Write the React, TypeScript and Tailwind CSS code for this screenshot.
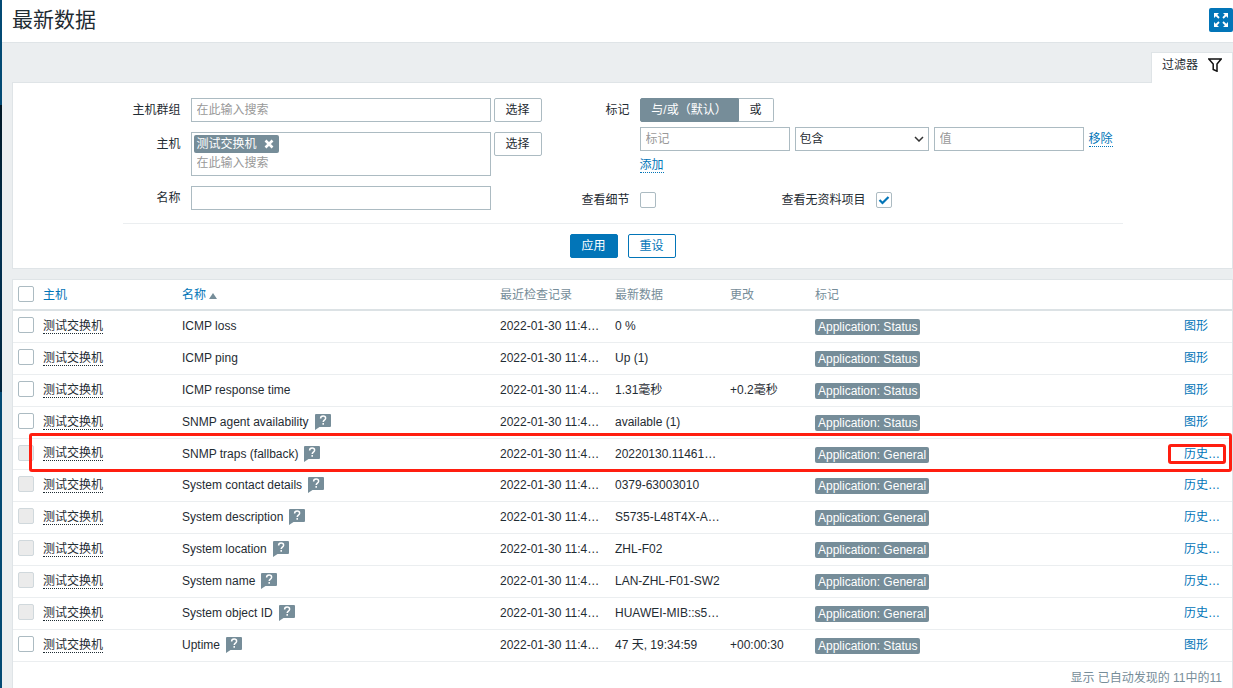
import { useState, type ReactNode } from 'react';

interface Item {
  name: string;
  help?: boolean;
  data: string;
  change?: string;
  tag: string;
  graph?: boolean;
  marked?: boolean;
}

const ITEMS: Item[] = [
  { name: 'ICMP loss', data: '0 %', tag: 'Application: Status', graph: true },
  { name: 'ICMP ping', data: 'Up (1)', tag: 'Application: Status', graph: true },
  { name: 'ICMP response time', data: '1.31毫秒', change: '+0.2毫秒', tag: 'Application: Status', graph: true },
  { name: 'SNMP agent availability', help: true, data: 'available (1)', tag: 'Application: Status', graph: true },
  { name: 'SNMP traps (fallback)', help: true, data: '20220130.11461…', tag: 'Application: General', marked: true },
  { name: 'System contact details', help: true, data: '0379-63003010', tag: 'Application: General' },
  { name: 'System description', help: true, data: 'S5735-L48T4X-A…', tag: 'Application: General' },
  { name: 'System location', help: true, data: 'ZHL-F02', tag: 'Application: General' },
  { name: 'System name', help: true, data: 'LAN-ZHL-F01-SW2', tag: 'Application: General' },
  { name: 'System object ID', help: true, data: 'HUAWEI-MIB::s5…', tag: 'Application: General' },
  { name: 'Uptime', help: true, data: '47 天, 19:34:59', change: '+00:00:30', tag: 'Application: Status', graph: true },
];

const INPUT = 'h-6 border border-[#acbbc2] bg-white px-[5px] placeholder:text-[#999] outline-none';
const BUTTON = 'h-6 w-12 shrink-0 rounded-[2px] border';
const DOTTED = 'border-b border-dotted leading-[14px]';

function Checkbox({ id, label, disabled, defaultChecked }: { id: string; label?: string; disabled?: boolean; defaultChecked?: boolean }) {
  return (
    <span className="relative block size-4">
      <input
        id={id}
        type="checkbox"
        aria-label={label}
        disabled={disabled}
        defaultChecked={defaultChecked}
        className="peer block size-4 appearance-none rounded-[2px] border border-[#acbbc2] bg-white disabled:border-[#d0d8dc] disabled:bg-[#ebebeb]"
      />
      <svg viewBox="0 0 16 16" className="pointer-events-none absolute inset-0 hidden size-4 peer-checked:block">
        <path d="M3.5 8l3 3 6-6" fill="none" stroke="#0275b8" strokeWidth="2.2" />
      </svg>
    </span>
  );
}

function HelpIcon() {
  return (
    <button type="button" aria-label="描述" className="block">
      <svg viewBox="0 0 16 16" className="block size-4">
        <path d="M1 0h14a1 1 0 0 1 1 1v11a1 1 0 0 1-1 1H4.500L0 16V1a1 1 0 0 1 1-1z" fill="#768d99" />
        <path d="M5.600 4.500C5.600 3 6.700 2.100 8.100 2.100s2.500.8 2.500 2.100c0 1.900-2.400 1.900-2.400 3.700M8.200 9v1.700" fill="none" stroke="#fff" strokeWidth="1.500" />
      </svg>
    </button>
  );
}

function FormRow({ label, htmlFor, children }: { label: string; htmlFor: string; children: ReactNode }) {
  return (
    <div className="flex gap-[10px]">
      <label htmlFor={htmlFor} className="w-[58px] shrink-0 text-right leading-6">{label}</label>
      {children}
    </div>
  );
}

function Filter() {
  const [mode, setMode] = useState('and');

  return (
    <form className="border border-[#dfe4e7] bg-white px-3 pt-[15px] pb-[10px]">
      <div className="mx-auto max-w-[1000px]">
        <div className="flex border-b border-[#ebeef0] pb-[11px]">
          <div className="flex w-[449px] shrink-0 flex-col gap-[10px]">
            <FormRow label="主机群组" htmlFor="groups">
              <div className="flex gap-[3px]">
                <input id="groups" placeholder="在此输入搜索" className={`${INPUT} w-[300px]`} />
                <button type="button" className={`${BUTTON} border-[#acbbc2]`}>选择</button>
              </div>
            </FormRow>
            <FormRow label="主机" htmlFor="hosts">
              <div className="flex items-start gap-[3px]">
                <div className="h-11 w-[300px] border border-[#acbbc2] p-[2px]">
                  <span className="flex h-[18px] w-fit items-center gap-[7px] rounded-[2px] bg-[#768d99] pr-[5px] pl-[3px] text-white">
                    测试交换机
                    <button type="button" aria-label="删除">
                      <svg viewBox="0 0 10 10" className="block size-[10px]">
                        <path d="M1.500 1.500l7 7M8.500 1.500l-7 7" stroke="#fff" strokeWidth="2.600" />
                      </svg>
                    </button>
                  </span>
                  <input id="hosts" placeholder="在此输入搜索" className="block h-5 w-full px-[3px] outline-none placeholder:text-[#999]" />
                </div>
                <button type="button" className={`${BUTTON} border-[#acbbc2]`}>选择</button>
              </div>
            </FormRow>
            <FormRow label="名称" htmlFor="name">
              <input id="name" className={`${INPUT} w-[300px]`} />
            </FormRow>
          </div>

          <div className="flex flex-1 flex-col">
            <FormRow label="标记" htmlFor="tag">
              <div>
                <div className="flex h-6 w-fit">
                  <button
                    type="button"
                    onClick={() => setMode('and')}
                    className={`w-[99px] rounded-l-[2px] border ${mode === 'and' ? 'border-[#768d99] bg-[#768d99] text-white' : 'border-[#acbbc2]'}`}
                  >
                    与/或（默认）
                  </button>
                  <button
                    type="button"
                    onClick={() => setMode('or')}
                    className={`w-[35px] rounded-r-[2px] border border-l-0 ${mode === 'or' ? 'border-[#768d99] bg-[#768d99] text-white' : 'border-[#acbbc2]'}`}
                  >
                    或
                  </button>
                </div>
                <div className="mt-[5px] flex items-center gap-[5px]">
                  <input id="tag" placeholder="标记" className={`${INPUT} w-[150px]`} />
                  <div className="relative">
                    <select aria-label="运算符" className="block h-6 w-[134px] appearance-none border border-[#acbbc2] bg-white px-1">
                      <option>包含</option>
                      <option>等于</option>
                    </select>
                    <svg viewBox="0 0 10 6" className="pointer-events-none absolute top-[9px] right-[5px] h-[6px] w-[10px]">
                      <path d="M1 1l4 4 4-4" fill="none" stroke="#333" strokeWidth="1.500" />
                    </svg>
                  </div>
                  <input aria-label="值" placeholder="值" className={`${INPUT} w-[150px]`} />
                  <button type="button" className={`${DOTTED} shrink-0 border-[#0275b8] text-[#0275b8]`}>移除</button>
                </div>
                <button type="button" className={`${DOTTED} mt-[7px] block border-[#0275b8] text-[#0275b8]`}>添加</button>
              </div>
            </FormRow>
            <div className="mt-[15px] flex items-center">
              <FormRow label="查看细节" htmlFor="details">
                <div className="flex items-center"><Checkbox id="details" /></div>
              </FormRow>
              <label htmlFor="empty" className="mr-[10px] ml-[126px] leading-6">查看无资料项目</label>
              <Checkbox id="empty" defaultChecked />
            </div>
          </div>
        </div>
        <div className="flex justify-center gap-[10px] pt-[10px]">
          <button type="button" className={`${BUTTON} border-[#0275b8] bg-[#0275b8] text-white`}>应用</button>
          <button type="button" className={`${BUTTON} border-[#0275b8] text-[#0275b8]`}>重设</button>
        </div>
      </div>
    </form>
  );
}

function ItemRow({ item, index }: { item: Item; index: number }) {
  return (
    <tr className={`relative border-b border-[#ebeef0] ${item.marked ? 'h-[31px]' : 'h-8'}`}>
      <td className="pb-[2px] pl-[5px]">
        <Checkbox id={`item-${index}`} label={item.name} disabled={!item.graph} />
        {item.marked && (
          <span className="pointer-events-none absolute -top-[5px] right-0 -bottom-[4px] left-4 rounded-[3px] border-3 border-[#ff1e10]" />
        )}
      </td>
      <td className="px-[5px]">
        <button type="button" className={`${DOTTED} block border-[#1f2c33]`}>测试交换机</button>
      </td>
      <td className="px-[5px]">
        <div className="flex items-center gap-[6px]">
          {item.name}
          {item.help && <HelpIcon />}
        </div>
      </td>
      <td className="px-[5px]">2022-01-30 11:4…</td>
      <td className="px-[5px]">{item.data}</td>
      <td className="px-[5px]">{item.change}</td>
      <td className="px-[5px] pt-[2px]">
        <span className="block h-4 w-fit rounded-[2px] bg-[#768d99] px-[3px] leading-4 text-white">{item.tag}</span>
      </td>
      <td className="px-[5px]">
        <a href="#" className="text-[#0275b8]">{item.graph ? '图形' : '历史…'}</a>
        {item.marked && (
          <span className="pointer-events-none absolute top-[6px] right-[6px] bottom-[4px] w-[58px] rounded-[3px] border-3 border-[#ff1e10]" />
        )}
      </td>
    </tr>
  );
}

function ItemTable() {
  return (
    <div className="mt-[10px] border border-[#dfe4e7] bg-white">
      <table className="w-full table-fixed border-collapse whitespace-nowrap">
        <colgroup>
          <col className="w-[25px]" />
          <col className="w-[139px]" />
          <col className="w-[318px]" />
          <col className="w-[115px]" />
          <col className="w-[115px]" />
          <col className="w-[85px]" />
          <col />
          <col className="w-[53px]" />
        </colgroup>
        <thead>
          <tr className="h-[30px] border-b-2 border-[#dce2e5] text-left text-[#768d99] *:font-normal">
            <th className="pb-[2px] pl-[5px]"><Checkbox id="all" label="全选" /></th>
            <th className="px-[5px]"><a href="#" className="text-[#0275b8]">主机</a></th>
            <th className="px-[5px]">
              <a href="#" className="flex items-center gap-[3px] text-[#0275b8]">
                名称
                <svg viewBox="0 0 8 6" className="mt-[2px] h-[6px] w-2"><path d="M4 0l4 6H0z" fill="#768d99" /></svg>
              </a>
            </th>
            <th className="px-[5px]">最近检查记录</th>
            <th className="px-[5px]">最新数据</th>
            <th className="px-[5px]">更改</th>
            <th className="px-[5px]">标记</th>
            <th />
          </tr>
        </thead>
        <tbody>
          {ITEMS.map((item, index) => (
            <ItemRow key={item.name} item={item} index={index} />
          ))}
        </tbody>
      </table>
      <div className="px-[10px] py-[7px] text-right leading-[18px] text-[#768d99]">显示 已自动发现的 11中的11</div>
    </div>
  );
}

// edge of the collapsed sidebar, with its open submenu
function SidebarEdge() {
  return (
    <div className="w-[2px] shrink-0 bg-[#034a74]">
      <div className="h-[105px]" />
      <div className="h-[287px] bg-linear-to-b from-[#001725] via-[#023152] to-[#00243d]" />
    </div>
  );
}

export default function App() {
  return (
    <div className="flex h-screen overflow-hidden bg-[#ebeef0] font-['Liberation_Sans','Noto_Sans_CJK_SC',sans-serif] text-xs text-[#1f2c33]">
      <SidebarEdge />
      <div className="min-w-0 flex-1">
        <header className="flex h-[43px] items-start justify-between border-b border-[#dfe4e7] bg-white pt-2 pl-[10px]">
          <h1 className="text-[21px] leading-6">最新数据</h1>
          <button type="button" aria-label="全屏" className="flex size-6 items-center justify-center rounded-[2px] bg-[#0275b8]">
            <svg viewBox="0 0 14 14" className="size-[14px]" fill="#fff" stroke="#fff">
              <path d="M0 0h5L0 5zM14 0v5L9 0zM0 14V9l5 5zM14 14H9l5-5z" stroke="none" />
              <path d="M2 2l3 3M12 2L9 5M2 12l3-3M12 12L9 9" strokeWidth="1.800" />
            </svg>
          </button>
        </header>
        <main className="pt-[9px] pl-[10px]">
          <div className="flex justify-end">
            <button type="button" className="relative -mb-px flex h-[31px] items-center gap-[10px] border border-b-0 border-[#dfe4e7] bg-white pr-[10px] pb-[7px] pl-[10px]">
              过滤器
              <svg viewBox="0 0 14 14" className="size-[14px]">
                <path d="M.8 1h12.400L9 6v7.200L5.200 11.500V6z" fill="none" stroke="#111" strokeWidth="1.500" />
              </svg>
            </button>
          </div>
          <Filter />
          <ItemTable />
        </main>
      </div>
    </div>
  );
}
